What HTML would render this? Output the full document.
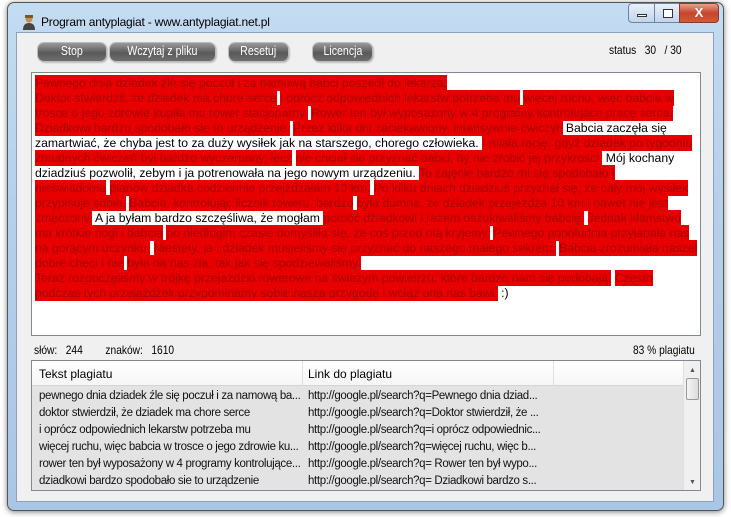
<!DOCTYPE html>
<html><head><meta charset="utf-8"><style>
*{margin:0;padding:0;box-sizing:border-box}
body{width:731px;height:517px;background:#fff;position:relative;overflow:hidden;font-family:"Liberation Sans",sans-serif}
.win{position:absolute;left:7px;top:2px;width:717px;height:509px;border:1px solid #555;border-radius:7px;background:linear-gradient(#c4dcf2,#b5d0ea 40%,#a9c6e4);box-shadow:0 1px 6px rgba(0,0,0,.5)}
.title{position:absolute;left:33px;top:12px;font-size:12px;color:#000;letter-spacing:-.2px}
.icon{position:absolute;left:14px;top:11px;width:14px;height:16px}
.client{position:absolute;left:16px;top:32px;width:698px;height:470px;background:#f0f0f0;border:1px solid #8aa2bd}
.wb{position:absolute;top:0;height:20px;border:1px solid #6d83a0;background:linear-gradient(#e8f0fa,#c3d5ea);}
.btn{position:absolute;top:43px;height:18px;border-radius:6px;background:linear-gradient(#9a9a9a,#5a5a5a 55%,#6e6e6e);color:#fff;font-size:12.5px;text-align:center;line-height:17px;box-shadow:0 0 0 1px #bbb,1px 1px 2px #777;}
.btn span{display:inline-block;transform:scaleX(.85)}
.txt{position:absolute;left:31px;top:72px;width:670px;height:264px;background:#fff;border:1px solid #828790;padding:3px 3px;font-size:12.2px;line-height:15px;color:#000;white-space:nowrap;overflow:hidden}
.r{background:#e80000;color:#a80000;padding:1px 0}
.sm{font-size:12px;position:absolute;transform-origin:left;}
.list{position:absolute;left:31px;top:360px;width:670px;height:131px;border:1px solid #828790;background:#e3e3e3;overflow:hidden}
.hdr{height:25px;background:linear-gradient(#fff,#f6f6f6);border-bottom:1px solid #d5d5d5;position:relative;font-size:12px}
.row{height:17px;font-size:11.5px;position:relative;color:#111;letter-spacing:-.35px}
.c1{position:absolute;left:7px;top:3px;white-space:nowrap}
.c2{position:absolute;left:276px;top:3px;white-space:nowrap}
.sb{position:absolute;right:0;top:0;width:17px;height:129px;background:#f0f0f0;border-left:1px solid #e0e0e0}
</style></head><body>
<div class="win">
<svg class="icon" viewBox="0 0 14 16"><circle cx="7" cy="5" r="3.5" fill="#c98d4a"/><rect x="3" y="1" width="8" height="3" fill="#7a5a20"/><path d="M1 16 Q1 9 7 9 Q13 9 13 16Z" fill="#444"/></svg>
<div class="title">Program antyplagiat - www.antyplagiat.net.pl</div>
<div class="wb" style="left:620px;width:27px;border-radius:4px 0 0 4px"><div style="position:absolute;left:8px;top:10px;width:10px;height:3px;border:1px solid #333;background:#fff"></div></div>
<div class="wb" style="left:646px;width:26px"><div style="position:absolute;left:8px;top:5px;width:10px;height:9px;border:1px solid #333;background:#fff"></div></div>
<div class="wb" style="left:671px;width:40px;border-radius:0 4px 4px 0;background:linear-gradient(#e8a08c,#c7452c 50%,#d25a38);border-color:#8a3a2a;color:#fff;font-weight:bold;text-align:center;font-size:13px;line-height:18px">X</div>
</div>
<div class="client"></div>
<div class="btn" style="left:38px;width:68px"><span>Stop</span></div>
<div class="btn" style="left:110px;width:105px"><span>Wczytaj z pliku</span></div>
<div class="btn" style="left:229px;width:59px"><span>Resetuj</span></div>
<div class="btn" style="left:313px;width:59px"><span>Licencja</span></div>
<div class="sm" style="left:609px;top:43px;transform:scaleX(.85)">status &nbsp;&nbsp;30 &nbsp;&nbsp;/ 30</div>
<div class="txt">
<span class="r">Pewnego dnia dziadek źle się poczuł i za namową babci poszedł do lekarza.</span><br>
<span class="r">Doktor stwierdził, że dziadek ma chore serce</span> <span class="r">i oprócz odpowiednich lekarstw potrzeba mu</span> <span class="r">więcej ruchu, więc babcia w</span><br>
<span class="r">trosce o jego zdrowie kupiła mu rower stacjonarny.</span> <span class="r">Rower ten był wyposażony w 4 programy kontrolujące pracę serca.</span><br>
<span class="r">Dziadkowi bardzo spodobało sie to urządzenie.</span> <span class="r">Przez kilka dni zaciekawiony, intensywnie ćwiczył.</span> Babcia zaczęła się<br>
zamartwiać, że chyba jest to za duży wysiłek jak na starszego, chorego człowieka. <span class="r">I miała rację, gdyż dziadek po tygodniu</span><br>
<span class="r">żmudnych ćwiczeń był bardzo wyczerpany, lecz</span> <span class="r">nie chciał się przyznać babci, by nie zrobić jej przykrości.</span> Mój kochany<br>
dziadziuś pozwolił, zebym i ja potrenowała na jego nowym urządzeniu. <span class="r">To zajęcie bardzo mi się spodobało i</span><br>
<span class="r">nieświadoma</span> <span class="r">planów dziadka codziennie przejżdżałam 10 km.</span> <span class="r">Po kilku dniach dziadziuś przyznał się, że cały mój wysiłek</span><br>
<span class="r">przypisuje sobie.</span> <span class="r">Babcia, kontrolując licznik roweru, bardzo</span> <span class="r">była dumna, że dziadek przejeżdża 10 km i nawet nie jest</span><br>
<span class="r">zmęczony.</span> A ja byłam bardzo szczęśliwa, że mogłam <span class="r">pomóc dziadkowi i razem oszukiwaliśmy babcię.</span> <span class="r">Jednak kłamstwo</span><br>
<span class="r">ma krótkie nogi i babcia</span> <span class="r">po niedługim czasie domyśliła się, że coś przed nią kryjemy.</span> <span class="r">Pewnego popołudnia przyłapała nas</span><br>
<span class="r">na gorącym uczynku.</span> <span class="r">Niestety, ja i dziadek musieliśmy się przyznać do naszego małego sekretu.</span> <span class="r">Babcia zrozumiała naszel</span><br>
<span class="r">dobre chęci i nie</span> <span class="r">była na nas zła, tak jak się spodziewaliśmy.</span><br>
<span class="r">Teraz rozpoczęliśmy w trójkę przejażdżki rowerowe na świeżym powietrzu, które bardzo nam się podobają.</span> <span class="r">Często</span><br>
<span class="r">podczas tych przejażdżek przypominamy sobie naszą przygodę i wciąż ona nas bawi.</span> :)
</div>
<div class="sm" style="left:34px;top:343px;transform:scaleX(.85)">słów: &nbsp;&nbsp;244 &nbsp;&nbsp;&nbsp;&nbsp;&nbsp;&nbsp;&nbsp;znaków: &nbsp;&nbsp;1610</div>
<div class="sm" style="left:633px;top:343px;transform:scaleX(.85)">83 % plagiatu</div>
<div class="list">
<div class="hdr"><span class="c1" style="top:6px">Tekst plagiatu</span><div style="position:absolute;left:270px;top:0;height:25px;border-left:1px solid #e0e0e0"></div><span class="c2" style="top:6px">Link do plagiatu</span><div style="position:absolute;left:521px;top:0;height:25px;border-left:1px solid #e0e0e0"></div></div>
<div class="row" style="margin-top:1px"><span class="c1">pewnego dnia dziadek źle się poczuł i za namową ba...</span><span class="c2">http://google.pl/search?q=Pewnego dnia dziad...</span></div>
<div class="row"><span class="c1">doktor stwierdził, że dziadek ma chore serce</span><span class="c2">http://google.pl/search?q=Doktor stwierdził, że ...</span></div>
<div class="row"><span class="c1">i oprócz odpowiednich lekarstw potrzeba mu</span><span class="c2">http://google.pl/search?q=i oprócz odpowiednic...</span></div>
<div class="row"><span class="c1">więcej ruchu, więc babcia w trosce o jego zdrowie ku...</span><span class="c2">http://google.pl/search?q=więcej ruchu, więc b...</span></div>
<div class="row"><span class="c1">rower ten był wyposażony w 4 programy kontrolujące...</span><span class="c2">http://google.pl/search?q= Rower ten był wypo...</span></div>
<div class="row"><span class="c1">dziadkowi bardzo spodobało sie to urządzenie</span><span class="c2">http://google.pl/search?q= Dziadkowi bardzo s...</span></div>
<div class="sb"><div style="position:absolute;left:5px;top:6px;font-size:7px;color:#555">▲</div><div style="position:absolute;left:2px;top:17px;width:13px;height:22px;border:1px solid #999;border-radius:2px;background:linear-gradient(90deg,#f4f4f4,#dcdcdc)"></div><div style="position:absolute;left:5px;bottom:4px;font-size:7px;color:#555">▼</div></div>
</div>
</body></html>
